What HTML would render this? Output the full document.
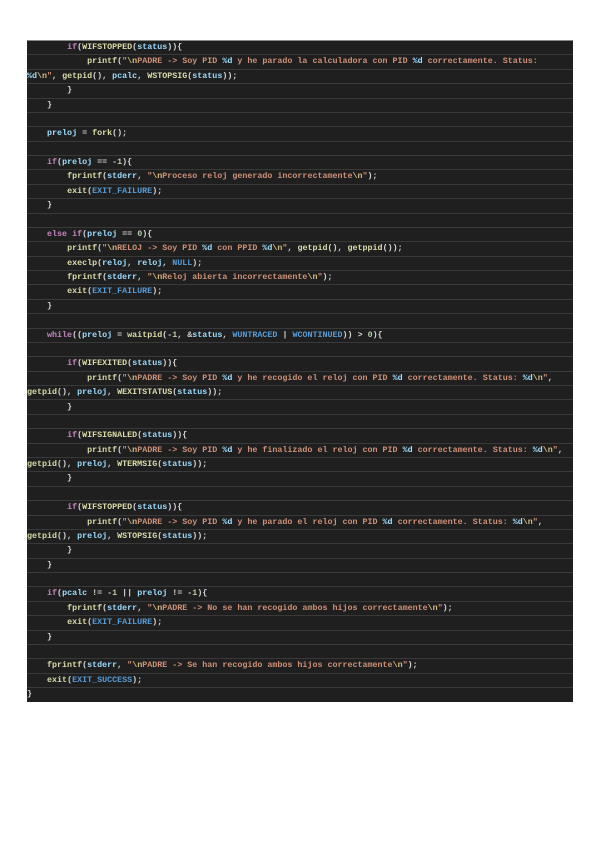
<!DOCTYPE html>
<html><head><meta charset="utf-8"><style>
html,body{margin:0;padding:0;background:#fff;width:600px;height:848px;overflow:hidden}
#c{position:absolute;left:27px;top:40px;width:546px;height:661px;background:#1f1f1f;border-top:1px solid #8a8a8a}
.r{position:absolute;left:0;width:546px;height:14.38px;border-bottom:1px solid #393939;box-sizing:border-box;font-family:"Liberation Mono",monospace;font-size:8.35px;line-height:13px;color:#d4d4d4;white-space:pre;font-weight:bold;letter-spacing:0}
.k{color:#c586c0}.f{color:#dcdcaa}.s{color:#ce9178}.e{color:#d7ba7d}.v{color:#9cdcfe}.n{color:#569cd6}.m{color:#b5cea8}
</style></head><body><div id="c">
<div class="r" style="top:0px">        <span class="k">if</span>(<span class="f">WIFSTOPPED</span>(<span class="v">status</span>)){</div>
<div class="r" style="top:14.38px">            <span class="f">printf</span>(<span class="s">"</span><span class="e">\n</span><span class="s">PADRE -&gt; Soy PID </span><span class="v">%d</span><span class="s"> y he parado la calculadora con PID </span><span class="v">%d</span><span class="s"> correctamente. Status:</span></div>
<div class="r" style="top:28.76px"><span class="v">%d</span><span class="e">\n</span><span class="s">"</span>, <span class="f">getpid</span>(), <span class="v">pcalc</span>, <span class="f">WSTOPSIG</span>(<span class="v">status</span>));</div>
<div class="r" style="top:43.14px">        }</div>
<div class="r" style="top:57.52px">    }</div>
<div class="r" style="top:71.9px"></div>
<div class="r" style="top:86.28px">    <span class="v">preloj</span> = <span class="f">fork</span>();</div>
<div class="r" style="top:100.66px"></div>
<div class="r" style="top:115.04px">    <span class="k">if</span>(<span class="v">preloj</span> == -<span class="m">1</span>){</div>
<div class="r" style="top:129.42px">        <span class="f">fprintf</span>(<span class="v">stderr</span>, <span class="s">"</span><span class="e">\n</span><span class="s">Proceso reloj generado incorrectamente</span><span class="e">\n</span><span class="s">"</span>);</div>
<div class="r" style="top:143.8px">        <span class="f">exit</span>(<span class="n">EXIT_FAILURE</span>);</div>
<div class="r" style="top:158.18px">    }</div>
<div class="r" style="top:172.56px"></div>
<div class="r" style="top:186.94px">    <span class="k">else if</span>(<span class="v">preloj</span> == <span class="m">0</span>){</div>
<div class="r" style="top:201.32px">        <span class="f">printf</span>(<span class="s">"</span><span class="e">\n</span><span class="s">RELOJ -&gt; Soy PID </span><span class="v">%d</span><span class="s"> con PPID </span><span class="v">%d</span><span class="e">\n</span><span class="s">"</span>, <span class="f">getpid</span>(), <span class="f">getppid</span>());</div>
<div class="r" style="top:215.7px">        <span class="f">execlp</span>(<span class="v">reloj</span>, <span class="v">reloj</span>, <span class="n">NULL</span>);</div>
<div class="r" style="top:230.08px">        <span class="f">fprintf</span>(<span class="v">stderr</span>, <span class="s">"</span><span class="e">\n</span><span class="s">Reloj abierta incorrectamente</span><span class="e">\n</span><span class="s">"</span>);</div>
<div class="r" style="top:244.46px">        <span class="f">exit</span>(<span class="n">EXIT_FAILURE</span>);</div>
<div class="r" style="top:258.84px">    }</div>
<div class="r" style="top:273.22px"></div>
<div class="r" style="top:287.6px">    <span class="k">while</span>((<span class="v">preloj</span> = <span class="f">waitpid</span>(-<span class="m">1</span>, &amp;<span class="v">status</span>, <span class="n">WUNTRACED</span> | <span class="n">WCONTINUED</span>)) &gt; <span class="m">0</span>){</div>
<div class="r" style="top:301.98px"></div>
<div class="r" style="top:316.36px">        <span class="k">if</span>(<span class="f">WIFEXITED</span>(<span class="v">status</span>)){</div>
<div class="r" style="top:330.74px">            <span class="f">printf</span>(<span class="s">"</span><span class="e">\n</span><span class="s">PADRE -&gt; Soy PID </span><span class="v">%d</span><span class="s"> y he recogido el reloj con PID </span><span class="v">%d</span><span class="s"> correctamente. Status: </span><span class="v">%d</span><span class="e">\n</span><span class="s">"</span>,</div>
<div class="r" style="top:345.12px"><span class="f">getpid</span>(), <span class="v">preloj</span>, <span class="f">WEXITSTATUS</span>(<span class="v">status</span>));</div>
<div class="r" style="top:359.5px">        }</div>
<div class="r" style="top:373.88px"></div>
<div class="r" style="top:388.26px">        <span class="k">if</span>(<span class="f">WIFSIGNALED</span>(<span class="v">status</span>)){</div>
<div class="r" style="top:402.64px">            <span class="f">printf</span>(<span class="s">"</span><span class="e">\n</span><span class="s">PADRE -&gt; Soy PID </span><span class="v">%d</span><span class="s"> y he finalizado el reloj con PID </span><span class="v">%d</span><span class="s"> correctamente. Status: </span><span class="v">%d</span><span class="e">\n</span><span class="s">"</span>,</div>
<div class="r" style="top:417.02px"><span class="f">getpid</span>(), <span class="v">preloj</span>, <span class="f">WTERMSIG</span>(<span class="v">status</span>));</div>
<div class="r" style="top:431.4px">        }</div>
<div class="r" style="top:445.78px"></div>
<div class="r" style="top:460.16px">        <span class="k">if</span>(<span class="f">WIFSTOPPED</span>(<span class="v">status</span>)){</div>
<div class="r" style="top:474.54px">            <span class="f">printf</span>(<span class="s">"</span><span class="e">\n</span><span class="s">PADRE -&gt; Soy PID </span><span class="v">%d</span><span class="s"> y he parado el reloj con PID </span><span class="v">%d</span><span class="s"> correctamente. Status: </span><span class="v">%d</span><span class="e">\n</span><span class="s">"</span>,</div>
<div class="r" style="top:488.92px"><span class="f">getpid</span>(), <span class="v">preloj</span>, <span class="f">WSTOPSIG</span>(<span class="v">status</span>));</div>
<div class="r" style="top:503.3px">        }</div>
<div class="r" style="top:517.68px">    }</div>
<div class="r" style="top:532.06px"></div>
<div class="r" style="top:546.44px">    <span class="k">if</span>(<span class="v">pcalc</span> != -<span class="m">1</span> || <span class="v">preloj</span> != -<span class="m">1</span>){</div>
<div class="r" style="top:560.82px">        <span class="f">fprintf</span>(<span class="v">stderr</span>, <span class="s">"</span><span class="e">\n</span><span class="s">PADRE -&gt; No se han recogido ambos hijos correctamente</span><span class="e">\n</span><span class="s">"</span>);</div>
<div class="r" style="top:575.2px">        <span class="f">exit</span>(<span class="n">EXIT_FAILURE</span>);</div>
<div class="r" style="top:589.58px">    }</div>
<div class="r" style="top:603.96px"></div>
<div class="r" style="top:618.34px">    <span class="f">fprintf</span>(<span class="v">stderr</span>, <span class="s">"</span><span class="e">\n</span><span class="s">PADRE -&gt; Se han recogido ambos hijos correctamente</span><span class="e">\n</span><span class="s">"</span>);</div>
<div class="r" style="top:632.72px">    <span class="f">exit</span>(<span class="n">EXIT_SUCCESS</span>);</div>
<div class="r" style="top:647.1px;border-bottom:none">}</div>
</div></body></html>
